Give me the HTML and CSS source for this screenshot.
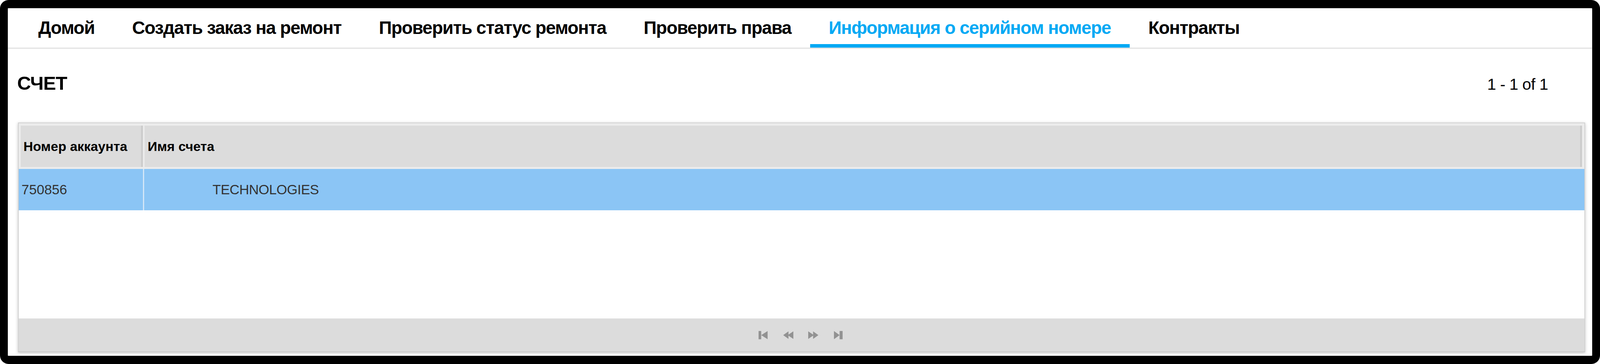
FILE: index.html
```html
<!DOCTYPE html>
<html lang="ru">
<head>
<meta charset="utf-8">
<title>Информация о серийном номере</title>
<link rel="stylesheet" href="styles.css">
</head>
<body>
<div class="frame">
  <nav class="tabs">
    <a class="tab">Домой</a>
    <a class="tab">Создать заказ на ремонт</a>
    <a class="tab">Проверить статус ремонта</a>
    <a class="tab">Проверить права</a>
    <a class="tab active">Информация о серийном номере</a>
    <a class="tab">Контракты</a>
  </nav>
  <div class="title-row">
    <h2 class="title">СЧЕТ</h2>
    <span class="count">1 - 1 of 1</span>
  </div>
  <div class="panel">
    <div class="grid-head">
      <div class="hcell c1">Номер аккаунта</div>
      <div class="hcell c2">Имя счета</div>
    </div>
    <div class="grid-row selected">
      <div class="cell c1">750856</div>
      <div class="cell c2"><span class="redacted"></span>TECHNOLOGIES</div>
    </div>
    <div class="grid-body"></div>
    <div class="pager">
      <svg class="pg" width="26" height="24" viewBox="0 0 27 24"><rect x="1" y="1" width="7" height="22"/><polygon points="8,12 25,1 25,23"/></svg>
      <svg class="pg" width="26" height="24" viewBox="0 0 27 24"><polygon points="0,12 14,2 14,22"/><polygon points="12,12 27,2 27,22"/></svg>
      <svg class="pg" width="26" height="24" viewBox="0 0 27 24"><polygon points="0,2 15,12 0,22"/><polygon points="13,2 27,12 13,22"/></svg>
      <svg class="pg" width="26" height="24" viewBox="0 0 27 24"><polygon points="2,1 17,12 2,23"/><rect x="17" y="1" width="8" height="22"/></svg>
    </div>
  </div>
</div>
</body>
</html>
```

FILE: styles.css
```css
html, body {
  margin: 0;
  padding: 0;
  background: #ffffff;
}

body {
  font-family: "Liberation Sans", Arial, sans-serif;
  color: #000;
}

.frame {
  box-sizing: border-box;
  height: 933px;
  border-style: solid;
  border-color: #000;
  border-width: 21px 20px;
  border-radius: 22px;
  background: #fff;
  overflow: hidden;
}

/* ---------- tabs ---------- */
.tabs {
  display: flex;
  box-sizing: border-box;
  height: 104px;
  padding-left: 30px;
  border-bottom: 3px solid #e2e2e2;
}

.tab {
  display: block;
  padding: 23px 48px 15px;
  font-size: 46px;
  font-weight: bold;
  letter-spacing: -1.3px;
  line-height: 54px;
  color: #000;
  border-bottom: 9px solid transparent;
  white-space: nowrap;
  cursor: pointer;
}

.tab.active {
  color: #03a9f4;
  border-bottom-color: #03a9f4;
}

/* ---------- title ---------- */
.title-row {
  display: flex;
  justify-content: space-between;
  align-items: baseline;
  box-sizing: border-box;
  height: 189px;
  padding: 59px 113px 0 24px;
}

.title {
  margin: 0;
  font-size: 49px;
  font-weight: bold;
  letter-spacing: -0.9px;
  line-height: 58px;
}

.count {
  font-size: 41px;
  letter-spacing: -0.6px;
  line-height: 50px;
  color: #000;
}

/* ---------- grid panel ---------- */
.panel {
  box-sizing: border-box;
  height: 589px;
  margin: 0 18px 0 26px;
  border: 2px solid #d2d2d2;
  border-bottom-color: #c8c8c8;
  box-shadow: 0 2px 8px rgba(0, 0, 0, 0.22);
  display: flex;
  flex-direction: column;
  background: #fff;
}

.grid-head {
  display: flex;
  background: #ececec;
  padding: 6px 6px 5px 5px;
}

.hcell {
  box-sizing: border-box;
  height: 106px;
  display: flex;
  align-items: center;
  background: #dcdcdc;
  border-right: 5px solid #cdcdcd;
  font-size: 34px;
  font-weight: bold;
  color: #000;
  white-space: nowrap;
}

.hcell.c1 {
  width: 313px;
  margin-right: 4px;
  padding-left: 7px;
}

.hcell.c2 {
  flex: 1;
  padding-left: 8px;
}

.grid-row {
  display: flex;
  height: 106px;
}

.grid-row.selected {
  background: #8bc5f5;
}

.cell {
  box-sizing: border-box;
  display: flex;
  align-items: center;
  font-size: 35px;
  color: #333;
  white-space: nowrap;
}

.cell.c1 {
  width: 321px;
  padding-left: 7px;
  border-right: 3px solid #d5e7f7;
}

.cell.c2 {
  flex: 1;
  padding-left: 8px;
  letter-spacing: -0.5px;
}

.redacted {
  display: inline-block;
  width: 167px;
}

.grid-body {
  height: 277px;
  background: #fff;
}

.pager {
  box-sizing: border-box;
  height: 85px;
  border-top: 1px solid #e6e6e6;
  background: #dcdcdc;
  display: flex;
  justify-content: center;
  align-items: center;
  gap: 38px;
  padding-right: 4px;
}

.pg {
  display: block;
  fill: #929292;
}
```
